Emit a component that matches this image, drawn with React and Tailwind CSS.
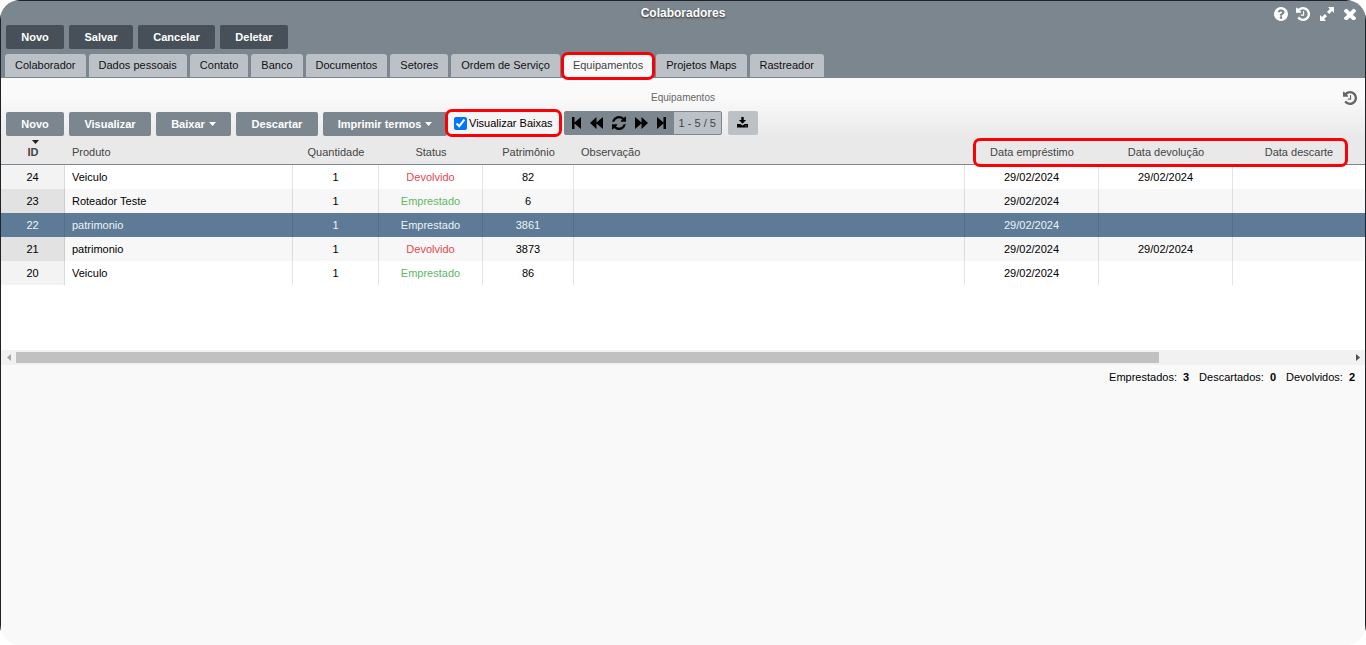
import React, { useState } from 'react';

const actions = [
  { label: 'Novo', width: 'w-[58px]' },
  { label: 'Salvar', width: 'w-16' },
  { label: 'Cancelar', width: 'w-[77px]' },
  { label: 'Deletar', width: 'w-[68px]' },
];

const tabs = [
  'Colaborador',
  'Dados pessoais',
  'Contato',
  'Banco',
  'Documentos',
  'Setores',
  'Ordem de Serviço',
  'Equipamentos',
  'Projetos Maps',
  'Rastreador',
];

const gridActions = [
  { label: 'Novo', width: 'w-[58px]' },
  { label: 'Visualizar', width: 'w-[82px]' },
  { label: 'Baixar', width: 'w-[75px]', menu: true },
  { label: 'Descartar', width: 'w-[82px]' },
  { label: 'Imprimir termos', width: 'w-[124px]', menu: true },
];

const equipamentos = [
  { id: 24, produto: 'Veiculo', quantidade: 1, status: 'Devolvido', patrimonio: 82, emprestimo: '29/02/2024', devolucao: '29/02/2024' },
  { id: 23, produto: 'Roteador Teste', quantidade: 1, status: 'Emprestado', patrimonio: 6, emprestimo: '29/02/2024', devolucao: '' },
  { id: 22, produto: 'patrimonio', quantidade: 1, status: 'Emprestado', patrimonio: 3861, emprestimo: '29/02/2024', devolucao: '' },
  { id: 21, produto: 'patrimonio', quantidade: 1, status: 'Devolvido', patrimonio: 3873, emprestimo: '29/02/2024', devolucao: '29/02/2024' },
  { id: 20, produto: 'Veiculo', quantidade: 1, status: 'Emprestado', patrimonio: 86, emprestimo: '29/02/2024', devolucao: '' },
];

const totals = [
  { label: 'Emprestados:', value: 3 },
  { label: 'Descartados:', value: 0 },
  { label: 'Devolvidos:', value: 2 },
];

const Icon = ({ box, d, className }) => (
  <svg viewBox={box} className={className} fill="currentColor" aria-hidden="true">
    <path d={d} />
  </svg>
);

const HelpIcon = () => (
  <Icon
    box="128 128 1536 1536"
    className="size-3.5"
    d="M1024 1376v-192q0-14-9-23t-23-9h-192q-14 0-23 9t-9 23v192q0 14 9 23t23 9h192q14 0 23-9t9-23zm256-672q0-88-55.5-163t-138.5-116-170-41q-243 0-371 213-15 24 8 42l132 100q7 6 19 6 16 0 25-12 53-68 86-92 34-24 86-24 48 0 85.500 26t37.500 59q0 38-20 61t-68 45q-63 28-115.500 86.500t-52.500 125.500v36q0 14 9 23t23 9h192q14 0 23-9t9-23q0-19 21.500-49.500t54.500-49.500q32-18 49-28.500t46-35 44.500-48 28-60.500 12.500-81zm384 192q0 209-103 385.500t-279.500 279.500-385.500 103-385.500-103-279.500-279.500-103-385.500 103-385.500 279.500-279.500 385.500-103 385.500 103 279.500 279.500 103 385.500z"
  />
);

const HistoryIcon = () => (
  <Icon
    box="0 128 1536 1536"
    className="size-3.5"
    d="M1536 896q0 156-61 298t-164 245-245 164-298 61q-172 0-327-72.500T177 1387q-7-10-6.500-22.500t8.500-20.500l137-138q10-9 25-9 16 2 23 12 73 95 179 147t225 52q104 0 198.500-40.500T1130 1258t109.500-163.500T1280 896t-40.500-198.500T1130 534 966.500 424.500 768 384q-98 0-188 35.500T420 521l137 138q31 30 14 69-17 40-59 40H64q-26 0-45-19T0 704V256q0-42 40-59 39-17 69 14l130 129q107-101 244.500-156.500T768 128q156 0 298 61t245 164 164 245 61 298zM896 608v448q0 14-9 23t-23 9H544q-14 0-23-9t-9-23v-64q0-14 9-23t23-9h224V608q0-14 9-23t23-9h64q14 0 23 9t9 23z"
  />
);

const ExpandIcon = () => (
  <Icon
    box="0 0 14 14"
    className="size-3.5"
    d="M8 0h6v6l-2-1.900L9.200 7 7 4.800 9.900 2zM6 14H0V8l2 1.900L4.800 7 7 9.200 4.100 12z"
  />
);

const CloseIcon = () => (
  <Icon
    box="302 302 1188 1188"
    className="size-3"
    d="M1490 1322q0 40-28 68l-136 136q-28 28-68 28t-68-28l-294-294-294 294q-28 28-68 28t-68-28l-136-136q-28-28-28-68t28-68l294-294-294-294q-28-28-28-68t28-68l136-136q28-28 68-28t68 28l294 294 294-294q28-28 68-28t68 28l136 136q28 28 28 68t-28 68l-294 294 294 294q28 28 28 68z"
  />
);

const RefreshIcon = () => (
  <Icon
    box="0 0 1536 1536"
    className="size-3.5"
    d="M1511 928q0 5-1 7-64 268-268 434.500T764 1536q-146 0-282.500-55T238 1324l-129 129q-19 19-45 19t-45-19-19-45V960q0-26 19-45t45-19h448q26 0 45 19t19 45-19 45l-137 137q71 66 161 102t187 36q134 0 250-65t186-179q11-17 53-117 8-23 30-23h192q13 0 22.500 9.500t9.500 22.500zm25-800v448q0 26-19 45t-45 19h-448q-26 0-45-19t-19-45 19-45l138-138Q969 256 768 256q-134 0-250 65T332 500q-11 17-53 117-8 23-30 23H50q-13 0-22.500-9.500T18 608v-7q65-268 270-434.500T768 0q146 0 284 55.500T1297 212l130-129q19-19 45-19t45 19 19 45z"
  />
);

const pager = [
  { label: 'Primeira página', icon: <Icon box="0 0 9 12" className="h-3 w-[9px]" d="M0 0h2.500v5.500L9 0v12L2.500 6.500V12H0z" /> },
  { label: 'Página anterior', icon: <Icon box="0 0 13 12" className="h-3 w-[13px]" d="M0 6 6.500 0v5.500L13 0v12L6.500 6.500V12z" /> },
  { label: 'Atualizar', icon: <RefreshIcon /> },
  { label: 'Próxima página', icon: <Icon box="0 0 13 12" className="h-3 w-[13px]" d="M13 6 6.500 0v5.500L0 0v12l6.500-5.500V12z" /> },
  { label: 'Última página', icon: <Icon box="0 0 9 12" className="h-3 w-[9px]" d="M9 0H6.500v5.500L0 0v12l6.500-5.500V12H9z" /> },
];

const Highlight = ({ className }) => (
  <span className={`pointer-events-none absolute z-10 rounded-[7px] border-3 border-[#fb0007] ${className}`} />
);

const statusColor = (status) => (status === 'Devolvido' ? 'text-[#ea4651]' : 'text-[#62b865]');

const Equipamentos = () => {
  const [selected, setSelected] = useState(22);
  const [showBaixas, setShowBaixas] = useState(true);

  return (
    <section>
      <div className="bg-linear-to-b from-[#fafafa] from-30% to-[#e9e9e9] pb-0.5">
        <div className="relative flex h-[31px] items-end justify-center pb-[3px] text-[10px] leading-4 text-[#666]">
          <h2>Equipamentos</h2>
          <button type="button" aria-label="Histórico" className="absolute right-2 bottom-1 text-[#666]">
            <HistoryIcon />
          </button>
        </div>
        <div className="flex h-7 items-center pl-[5px]">
          <div className="flex gap-[5px] pt-0.5">
            {gridActions.map((item) => (
              <button
                key={item.label}
                type="button"
                className={`flex h-6 items-center justify-center gap-1 rounded-[2px] bg-[#7c868f] font-bold whitespace-nowrap text-white ${item.width}`}
              >
                {item.label}
                {item.menu && <Icon box="0 0 7 4" className="h-1 w-[7px]" d="M0 0h7L3.500 4z" />}
              </button>
            ))}
          </div>
          <label className="relative -ml-0.5 flex h-7 items-center gap-0.5 rounded-[7px] border-3 border-[#fb0007] bg-[#f5f5f5] px-1.5">
            <input
              type="checkbox"
              className="size-[13px]"
              checked={showBaixas}
              onChange={(e) => setShowBaixas(e.target.checked)}
            />
            Visualizar Baixas
          </label>
          <div className="ml-0.5 flex h-6 items-center overflow-hidden rounded-[2px] border border-[#7c868f] bg-[#7c868f]">
            <div className="flex items-center gap-[9px] pr-2 pl-[7px]">
              {pager.map((item) => (
                <button key={item.label} type="button" aria-label={item.label}>
                  {item.icon}
                </button>
              ))}
            </div>
            <span className="bg-[#bcc1c8] px-[5px] leading-[22px] text-[#444]">1 - 5 / 5</span>
          </div>
          <button
            type="button"
            aria-label="Exportar"
            className="ml-1.5 flex h-6 w-[30px] items-center justify-center rounded-[2px] bg-[#bcc1c6] pb-0.5"
          >
            <Icon
              box="0 0 11 11"
              className="size-[11px]"
              d="M4.300 0h2.400v3h2.400L5.500 6.800 1.900 3h2.400zM0 7h3.300l2.200 1.600L7.700 7H11v3.500H0zM8.500 8.600v.8h1v-.8z"
            />
          </button>
        </div>
      </div>

      <div className="bg-white pb-[65px]">
        <table className="w-full table-fixed border-separate border-spacing-0">
          <colgroup>
            <col className="w-16" />
            <col className="w-[228px]" />
            <col className="w-[86px]" />
            <col className="w-[104px]" />
            <col className="w-[91px]" />
            <col />
            <col className="w-[134px]" />
            <col className="w-[134px]" />
            <col className="w-[132px]" />
          </colgroup>
          <thead>
            <tr className="h-[26px] bg-[#e9e9e9] text-[#444] [&>th]:border-b [&>th]:border-[#7c868f] [&>th]:p-0 [&>th]:pt-0.5 [&>th]:font-normal">
              <th className="relative">
                <Icon box="0 0 7 4" className="absolute top-px left-[31px] h-1 w-[7px] text-[#222]" d="M0 0h7L3.500 4z" />
                <span className="font-bold">ID</span>
              </th>
              <th className="text-left"><span className="pl-[7px]">Produto</span></th>
              <th>Quantidade</th>
              <th>Status</th>
              <th>Patrimônio</th>
              <th className="text-left"><span className="pl-[7px]">Observação</span></th>
              <th className="relative">
                Data empréstimo
                <Highlight className="-top-px left-2 h-[29px] w-[375px]" />
              </th>
              <th>Data devolução</th>
              <th>Data descarte</th>
            </tr>
          </thead>
          <tbody>
            {equipamentos.map((item) => {
              const active = item.id === selected;
              return (
                <tr
                  key={item.id}
                  onClick={() => setSelected(item.id)}
                  className={`h-6 text-center [&>td]:border-r [&>td]:border-black/10 [&>td]:p-0 [&>td:last-child]:border-r-0 ${
                    active ? 'bg-[#5d7b96] text-[#eef2f5]' : 'bg-white even:bg-[#f7f7f7]'
                  }`}
                >
                  <td className={active ? '' : 'bg-[#f3f3f3] [tr:nth-child(even)>&]:bg-[#e2e2e2]'}>{item.id}</td>
                  <td className="text-left"><span className="pl-[7px]">{item.produto}</span></td>
                  <td>{item.quantidade}</td>
                  <td className={active ? '' : statusColor(item.status)}>{item.status}</td>
                  <td>{item.patrimonio}</td>
                  <td></td>
                  <td>{item.emprestimo}</td>
                  <td>{item.devolucao}</td>
                  <td></td>
                </tr>
              );
            })}
          </tbody>
        </table>
      </div>

      <div className="flex h-[15px] items-center bg-[#f1f1f1]">
        <div className="flex w-[15px] justify-center text-[#a3a3a3]">
          <Icon box="0 0 4 7" className="h-[7px] w-1" d="M4 0v7L0 3.500z" />
        </div>
        <div className="flex-1">
          <div className="h-[11px] w-6/7 bg-[#c1c1c1]" />
        </div>
        <div className="flex w-[15px] justify-center text-[#505050]">
          <Icon box="0 0 4 7" className="h-[7px] w-1" d="M0 0v7l4-3.500z" />
        </div>
      </div>

      <div className="flex justify-end gap-2.5 py-1 pr-2.5 leading-4">
        {totals.map((item) => (
          <span key={item.label} className="flex gap-1.5">
            {item.label} <b>{item.value}</b>
          </span>
        ))}
      </div>
    </section>
  );
};

const App = () => {
  const [tab, setTab] = useState('Equipamentos');

  return (
    <div className="overflow-hidden rounded-[20px] font-['Liberation_Sans',Arial,sans-serif] text-[11px] text-black">
      <div className="min-h-screen border-x border-t border-[#1f2228] bg-[#f9f9f9]">
        <header className="bg-[#7c868f] pb-px">
          <div className="relative flex h-6 items-center justify-center">
            <h1 className="text-xs font-bold text-white text-shadow-[0_1px_2px_#333]">Colaboradores</h1>
            <div className="absolute top-1.5 right-[9px] flex items-center text-white">
              <button type="button" aria-label="Ajuda" className="mr-2"><HelpIcon /></button>
              <button type="button" aria-label="Histórico" className="mr-2.5"><HistoryIcon /></button>
              <button type="button" aria-label="Expandir" className="mr-2.5"><ExpandIcon /></button>
              <button type="button" aria-label="Fechar"><CloseIcon /></button>
            </div>
          </div>
          <div className="flex gap-[5px] px-[5px]">
            {actions.map((item) => (
              <button key={item.label} type="button" className={`h-6 rounded-[2px] bg-[#475059] font-bold text-white ${item.width}`}>
                {item.label}
              </button>
            ))}
          </div>
          <nav className="mt-[5px] flex gap-[3px] px-1" role="tablist">
            {tabs.map((label) => (
              <button
                key={label}
                type="button"
                role="tab"
                aria-selected={tab === label}
                onClick={() => setTab(label)}
                className={`relative h-[23px] rounded-t-[3px] px-2.5 ${
                  tab === label ? 'bg-[#f9f9f9] text-[#444]' : 'bg-[#bcc1c8] text-[#111]'
                }`}
              >
                {label}
                {label === 'Equipamentos' && <Highlight className="-inset-x-0.5 -top-0.5 -bottom-[3px]" />}
              </button>
            ))}
          </nav>
        </header>
        <Equipamentos />
      </div>
    </div>
  );
};

export default App;
